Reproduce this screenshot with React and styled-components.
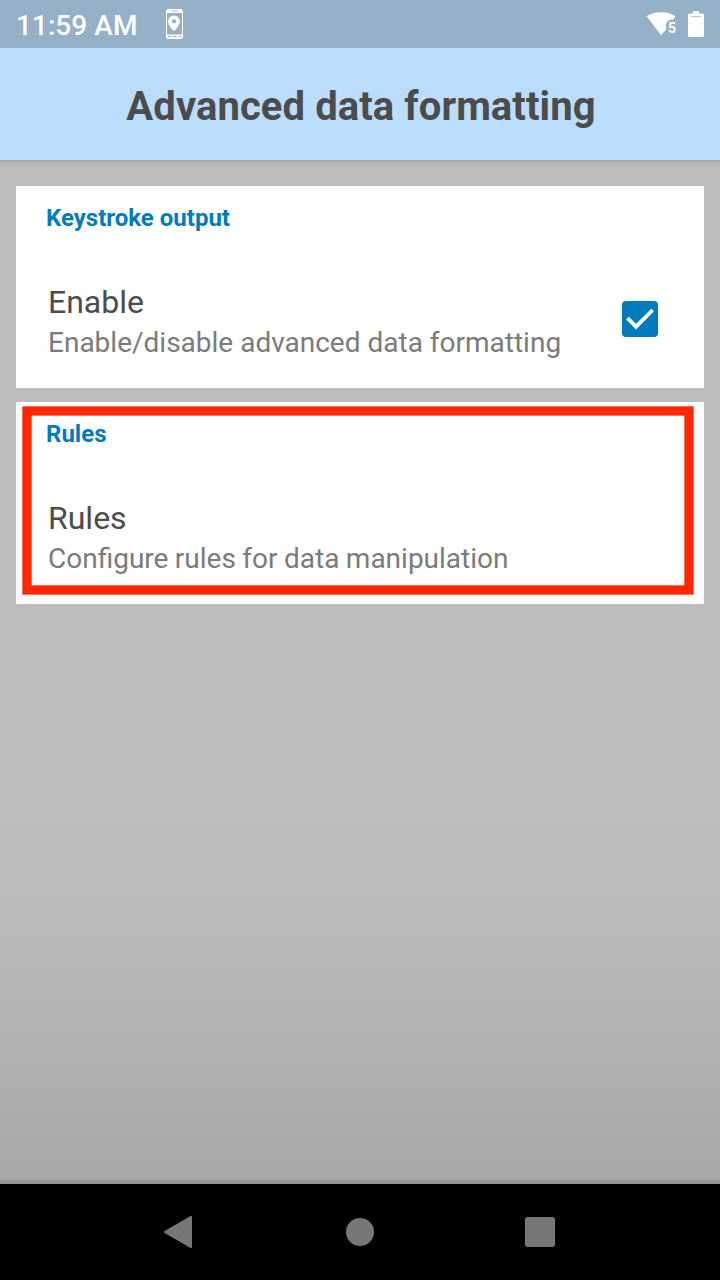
import React from "react";
import styled, { createGlobalStyle } from "styled-components";

const GlobalStyle = createGlobalStyle`
  * { box-sizing: border-box; }
  body { margin: 0; background: #bdbdbd; font-family: Roboto, "Liberation Sans", sans-serif; }
`;

const Screen = styled.div`
  width: 720px;
  height: 1280px;
  display: flex;
  flex-direction: column;
  overflow: hidden;
`;

const StatusBar = styled.header`
  height: 48px;
  flex: none;
  display: flex;
  align-items: center;
  padding: 0 16px;
  background: #96b0c7;
  color: #fff;
`;

const Clock = styled.time`
  width: 149px;
  font-size: 28px;
  font-weight: 500;
  line-height: 32px;
  letter-spacing: 0.05px;
  white-space: nowrap;
  padding-top: 3px;
`;

const StatusIcons = styled.div`
  margin-left: auto;
  display: flex;
  align-items: center;
  gap: 11px;
`;

const AppBar = styled.div`
  height: 112px;
  flex: none;
  display: flex;
  align-items: center;
  justify-content: center;
  padding: 6px 0 0 2px;
  background: #badefb;
`;

const Title = styled.h1`
  margin: 0;
  font-size: 40px;
  font-weight: 700;
  line-height: 48px;
  letter-spacing: 0.08px;
  color: #4c4c4c;
  white-space: nowrap;
`;

const Content = styled.main`
  flex: 1;
  display: flex;
  flex-direction: column;
  gap: 14px;
  padding: 26px 16px 0;
  background:
    linear-gradient(rgba(0, 0, 0, 0.12), rgba(0, 0, 0, 0.04) 3px, transparent 9px),
    linear-gradient(#bdbdbd 0, #bdbdbd 640px, #bbbbbb 730px, #b1b1b1 900px, #a7a7a7 1020px);
  border-bottom: 4px solid #959595;
`;

const Card = styled.section`
  position: relative;
  height: 202px;
  padding: 16px 46px 0 32px;
  background: #fff;
`;

const Category = styled.h2`
  margin: 0 0 0 -2px;
  font-size: 24px;
  font-weight: 700;
  line-height: 32px;
  color: #007cbe;
`;

const Preference = styled.div`
  display: flex;
  align-items: center;
  justify-content: space-between;
  margin-top: 48px;
  height: 82px;
`;

const PreferenceName = styled.div`
  font-size: 32px;
  line-height: 40px;
  color: #4c4c4c;
`;

const Summary = styled.div`
  font-size: 28px;
  line-height: 42px;
  word-spacing: ${(p) => p.$wordGap || "normal"};
  color: #7b7b7b;
  white-space: nowrap;
`;

const Checkbox = styled.span`
  width: 36px;
  height: 36px;
  border-radius: 4px;
  background: #007cbe;
  display: flex;
  margin-bottom: 8px;
`;

const Highlight = styled.svg`
  position: absolute;
  left: 6px;
  top: 4px;
  width: 673px;
  height: 190px;
`;

const NavBar = styled.nav`
  height: 96px;
  flex: none;
  display: flex;
  justify-content: space-between;
  align-items: center;
  padding: 0 160px;
  background: #000;
`;

const NavIcon = styled.svg`
  width: 40px;
  height: 40px;
  fill: #777;
`;

function PhoneLocationIcon() {
  return (
    <svg width="18" height="32" viewBox="0 0 18 32">
      <path fill="#fff" fillRule="evenodd" d="M3 1h12.500a2.500 2.500 0 0 1 2.500 2.500v25a2.500 2.500 0 0 1-2.500 2.500H3.500A2.500 2.500 0 0 1 1 28.500V3.500A2.500 2.500 0 0 1 3 1zM2 5v21.500h15V5zM6.500 2.600v1h6v-1zM3 28v1h2.500v-1zM7.500 28v1h4v-1zM13.500 28v1H16v-1z" />
      <path fill="#fff" fillRule="evenodd" d="M9 7.500a5.900 5.900 0 0 0-5.900 5.900c0 4.200 5.900 9.600 5.900 9.600s5.900-5.400 5.900-9.600a5.900 5.900 0 0 0-5.900-5.900zm0 3.700a2.100 2.100 0 1 1 0 4.200 2.100 2.100 0 0 1 0-4.200z" />
    </svg>
  );
}

const WifiBand = styled.span`
  position: relative;
  display: flex;
`;

const BandLabel = styled.span`
  position: absolute;
  left: 22px;
  top: 10px;
  font-size: 14px;
  font-weight: 700;
  line-height: 16px;
`;

function WifiIcon() {
  return (
    <WifiBand>
      <svg width="31" height="28" viewBox="0 0 31 28">
        <path fill="#fff" d="M.7 6.200C4.500 3.600 9.500 2.300 15 2.300s10.500 1.300 14.300 3.900l-2 3.200H26c-3.500 0-6 2.500-6 6v4.300L15 25.200z" />
      </svg>
      <BandLabel>5</BandLabel>
    </WifiBand>
  );
}

function BatteryIcon() {
  return (
    <svg width="16" height="28" viewBox="0 0 16 28">
      <path fill="#fff" d="M5 1h6v2.500h3.300A1.700 1.700 0 0 1 16 5.200v20.200a1.700 1.700 0 0 1-1.700 1.700H1.700A1.700 1.700 0 0 1 0 25.400V5.200a1.700 1.700 0 0 1 1.700-1.700H5z" />
      <path stroke="#96b0c7" strokeWidth=".8" d="M3 6.400h10" />
    </svg>
  );
}

function SettingCard({ category, name, summary, wordGap, children, highlighted }) {
  return (
    <Card>
      <Category>{category}</Category>
      <Preference>
        <div>
          <PreferenceName>{name}</PreferenceName>
          <Summary $wordGap={wordGap}>{summary}</Summary>
        </div>
        {children}
      </Preference>
      {highlighted && (
        <Highlight viewBox="0 0 673 190">
          <rect x="5" y="5" width="662" height="179" fill="none" stroke="#ff2600" strokeWidth="9.300" />
        </Highlight>
      )}
    </Card>
  );
}

export default function App() {
  return (
    <Screen>
      <GlobalStyle />
      <StatusBar>
        <Clock>11:59 AM</Clock>
        <PhoneLocationIcon />
        <StatusIcons>
          <WifiIcon />
          <BatteryIcon />
        </StatusIcons>
      </StatusBar>
      <AppBar>
        <Title>Advanced data formatting</Title>
      </AppBar>
      <Content>
        <SettingCard category="Keystroke output" name="Enable" summary="Enable/disable advanced data formatting">
          <Checkbox role="checkbox" aria-checked="true">
            <svg width="36" height="36" viewBox="0 0 36 36">
              <path d="M5.500 17.200l8.500 8.500L30.700 9" fill="none" stroke="#fff" strokeWidth="3.800" />
            </svg>
          </Checkbox>
        </SettingCard>
        <SettingCard
          category="Rules"
          name="Rules"
          summary="Configure rules for data manipulation"
          wordGap="-0.5px"
          highlighted
        />
      </Content>
      <NavBar>
        <NavIcon viewBox="0 0 40 40">
          <path d="M30.200 4.200Q32 3.200 32 5.200V34.800Q32 36.800 30.200 35.800L5 21.200Q3 20 5 18.800z" />
        </NavIcon>
        <NavIcon viewBox="0 0 40 40">
          <circle cx="20" cy="20" r="14" />
        </NavIcon>
        <NavIcon viewBox="0 0 40 40">
          <rect x="5" y="5" width="30" height="30" rx="3" />
        </NavIcon>
      </NavBar>
    </Screen>
  );
}
